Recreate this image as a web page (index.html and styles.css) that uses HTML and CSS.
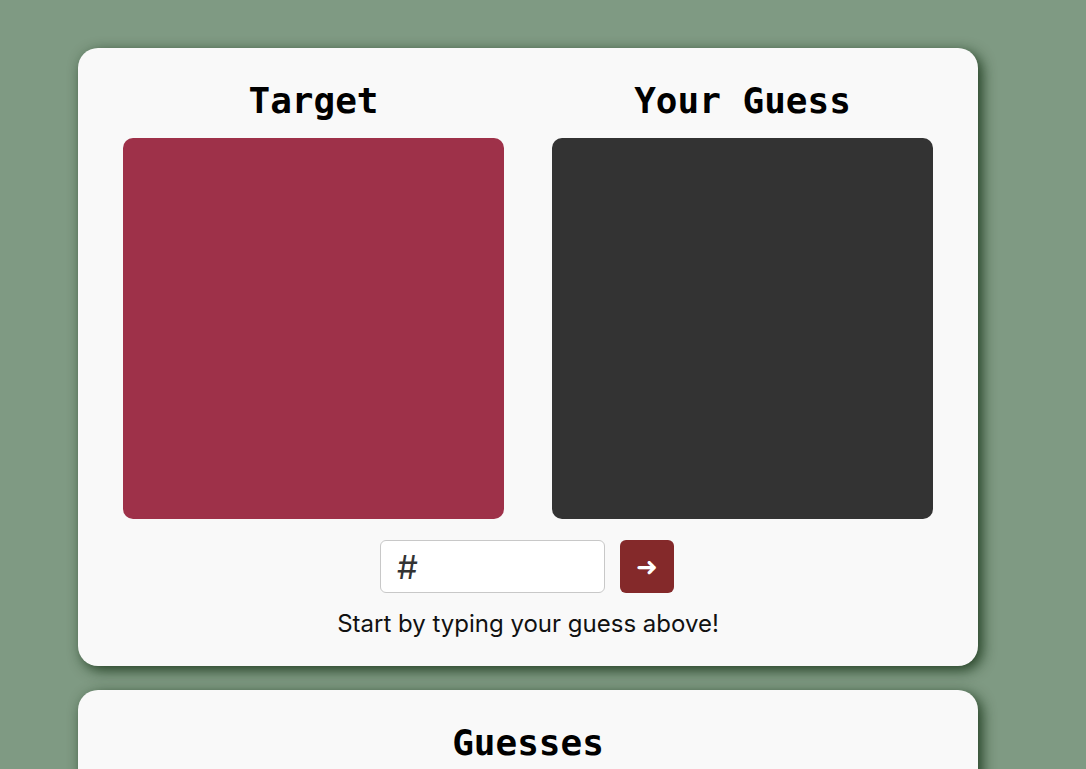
FILE: index.html
```html
<!DOCTYPE html>
<html>
<head>
<meta charset="utf-8">
<link rel="stylesheet" href="styles.css">
</head>
<body>
<main class="page">
  <section class="card">
    <div class="swatches">
      <div class="swatch-col">
        <h2 class="title">Target</h2>
        <div class="swatch swatch-target"></div>
      </div>
      <div class="swatch-col">
        <h2 class="title">Your Guess</h2>
        <div class="swatch swatch-guess"></div>
      </div>
    </div>
    <form class="guess-form">
      <input class="hex-input" type="text" value="#">
      <button class="submit" type="button">&#10140;</button>
    </form>
    <p class="status">Start by typing your guess above!</p>
  </section>
  <section class="card card-guesses">
    <h2 class="title">Guesses</h2>
  </section>
</main>
</body>
</html>
```
FILE: styles.css
```css
html, body {
  margin: 0;
  padding: 0;
  background: #7f9a83;
  height: 100%;
  overflow: hidden;
}
.page {
  display: flex;
  flex-direction: column;
  gap: 24px;
  padding: 48px 0 0 78px;
}
.card {
  width: 900px;
  box-sizing: border-box;
  background: #f9f9f9;
  border-radius: 20px;
  box-shadow: 4px 4px 14px rgba(15, 45, 15, 0.85);
  padding: 32px 45px 27px;
}
.swatches {
  display: flex;
  gap: 48px;
}
.swatch-col {
  display: flex;
  flex-direction: column;
  align-items: center;
  gap: 16px;
}
.title {
  margin: 0;
  font-family: "DejaVu Sans Mono", monospace;
  font-weight: bold;
  font-size: 36px;
  line-height: 42px;
  color: #000;
  text-align: center;
}
.swatch {
  width: 381px;
  height: 381px;
  border-radius: 10px;
}
.swatch-target { background: #9e3149; }
.swatch-guess { background: #333333; }
.guess-form {
  display: flex;
  justify-content: center;
  gap: 15px;
  margin: 21px 0 0;
  padding-right: 2px;
}
.hex-input {
  width: 225px;
  height: 53px;
  box-sizing: border-box;
  border: 1px solid #c8c8c8;
  border-radius: 6px;
  background: #fff;
  padding: 0 16px;
  font-family: "Inter", sans-serif;
  font-size: 33px;
  color: #333;
  outline: none;
}
.submit {
  width: 54px;
  height: 53px;
  border: none;
  border-radius: 6px;
  background: #84292a;
  color: #fff;
  font-family: "DejaVu Sans", sans-serif;
  font-weight: bold;
  font-size: 26px;
  padding: 0;
}
.status {
  margin: 16px 0 0;
  text-align: center;
  font-family: "Inter", sans-serif;
  font-size: 24px;
  line-height: 30px;
  color: #111;
}
.card-guesses {
  height: 200px;
  padding-top: 32px;
}
```
